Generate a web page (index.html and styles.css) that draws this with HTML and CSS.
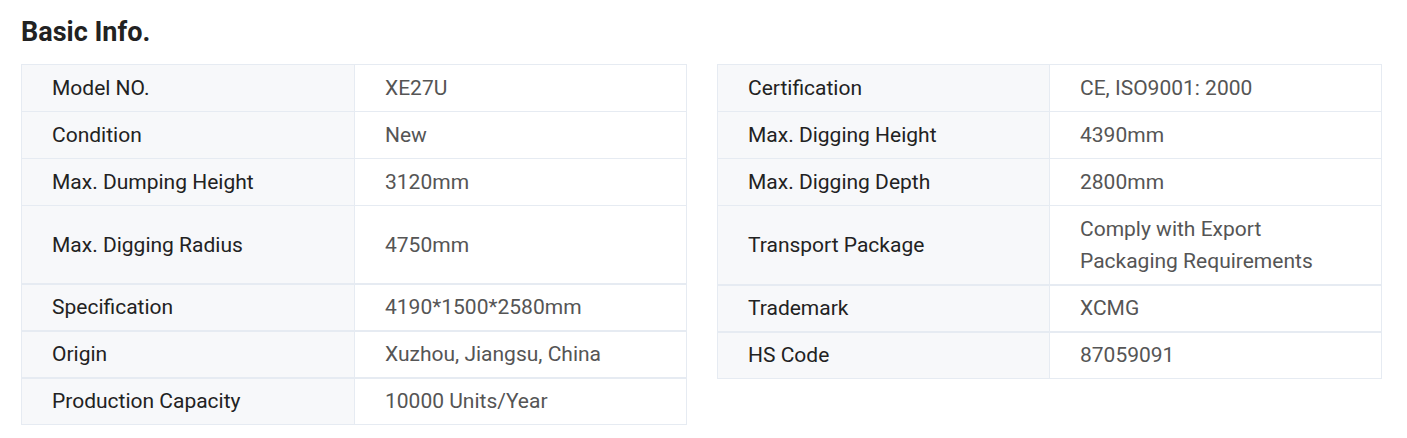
FILE: index.html
```html
<!DOCTYPE html>
<html>
<head>
<meta charset="utf-8">
<link rel="stylesheet" href="styles.css">
</head>
<body>
<section class="basic">
  <h2 class="title">Basic Info.</h2>
  <div class="grid">
    <div class="table table-left">
      <div class="row"><div class="lab">Model NO.</div><div class="val">XE27U</div></div>
      <div class="row"><div class="lab">Condition</div><div class="val">New</div></div>
      <div class="row"><div class="lab">Max. Dumping Height</div><div class="val">3120mm</div></div>
      <div class="row tall"><div class="lab">Max. Digging Radius</div><div class="val">4750mm</div></div>
      <div class="row thick"><div class="lab">Specification</div><div class="val">4190*1500*2580mm</div></div>
      <div class="row thick"><div class="lab">Origin</div><div class="val">Xuzhou, Jiangsu, China</div></div>
      <div class="row thick"><div class="lab">Production Capacity</div><div class="val">10000 Units/Year</div></div>
    </div>
    <div class="table table-right">
      <div class="row"><div class="lab">Certification</div><div class="val">CE, ISO9001: 2000</div></div>
      <div class="row"><div class="lab">Max. Digging Height</div><div class="val">4390mm</div></div>
      <div class="row"><div class="lab">Max. Digging Depth</div><div class="val">2800mm</div></div>
      <div class="row tall"><div class="lab">Transport Package</div><div class="val">Comply with Export Packaging Requirements</div></div>
      <div class="row thick"><div class="lab">Trademark</div><div class="val">XCMG</div></div>
      <div class="row thick"><div class="lab">HS Code</div><div class="val">87059091</div></div>
    </div>
  </div>
</section>
</body>
</html>
```
FILE: styles.css
```css
html, body {
  margin: 0;
  padding: 0;
  background: #ffffff;
  font-family: Roboto, "Liberation Sans", Arial, sans-serif;
}
.basic {
  padding: 14px 25px 0 21px;
}
.title {
  margin: 0 0 14px 0;
  font-size: 27px;
  line-height: 36px;
  font-weight: 700;
  color: #222222;
}
.grid {
  display: grid;
  grid-template-columns: 666px 665px;
  column-gap: 30px;
  align-items: start;
}
.table {
  border: 1px solid #e6ebf2;
}
.row {
  display: grid;
  border-top: 1px solid #e6ebf2;
}
.table-left .row {
  grid-template-columns: 333px 1fr;
}
.table-right .row {
  grid-template-columns: 332px 1fr;
}
.row:first-child {
  border-top: none;
}
.row.thick {
  border-top-width: 2px;
}
.lab, .val {
  padding: 7px 20px 7px 30px;
  font-size: 21px;
  line-height: 32px;
  display: flex;
  align-items: center;
}
.row.thick .lab, .row.thick .val {
  padding-top: 6px;
}
.lab {
  background: #f7f8fa;
  color: #222222;
  border-right: 1px solid #e6ebf2;
}
.val {
  color: #555555;
  padding-right: 40px;
}
.row.tall .lab, .row.tall .val {
  min-height: 63px;
}
```
